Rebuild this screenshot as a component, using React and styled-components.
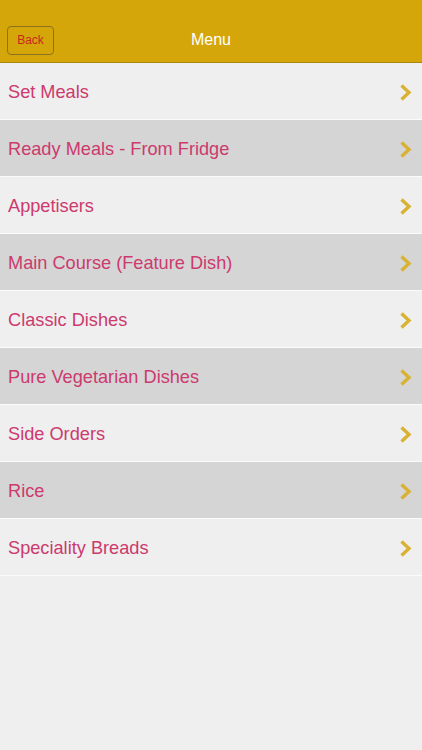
import React from "react";
import styled, { createGlobalStyle } from "styled-components";

const Global = createGlobalStyle`
  html, body { margin: 0; padding: 0; background: #efefef; }
  body { font-family: "Liberation Sans", Arial, sans-serif; }
`;

const Page = styled.div`
  width: 422px;
  min-height: 750px;
  background: #efefef;
`;

const Header = styled.header`
  box-sizing: content-box;
  height: 44px;
  padding: 18px 7px 0;
  background: #d4a60a;
  border-bottom: 1px solid #a8870c;
  display: grid;
  grid-template-columns: 1fr auto 1fr;
  align-items: center;
`;

const BackButton = styled.button`
  justify-self: start;
  width: 47px;
  height: 29px;
  border: 1.5px solid #8a7224;
  border-radius: 4px;
  background: transparent;
  color: #c9261c;
  font-family: "Liberation Sans", Arial, sans-serif;
  font-size: 12px;
  padding: 0;
`;

const Title = styled.h1`
  margin: 0;
  color: #ffffff;
  font-size: 16px;
  font-weight: normal;
`;

const List = styled.ul`
  list-style: none;
  margin: 0;
  padding: 0;
`;

const Row = styled.li`
  box-sizing: border-box;
  height: 57px;
  border-bottom: 1px solid #fbfbfb;
  background: ${(p) => (p.$alt ? "#d5d5d5" : "#efefef")};
  display: flex;
  align-items: center;
  justify-content: space-between;
  padding: 2px 9px 0 8px;
`;

const Label = styled.span`
  color: #cc3a6e;
  font-size: 18.2px;
`;

const Chevron = () => (
  <svg width="15" height="19" viewBox="0 0 15 19">
    <path d="M3.5 2.5 L11 9.5 L3.5 16.5" fill="none" stroke="#d9b234" strokeWidth="3.4" strokeLinecap="butt" strokeLinejoin="miter" />
  </svg>
);

const items = [
  "Set Meals",
  "Ready Meals - From Fridge",
  "Appetisers",
  "Main Course (Feature Dish)",
  "Classic Dishes",
  "Pure Vegetarian Dishes",
  "Side Orders",
  "Rice",
  "Speciality Breads",
];

export default function App() {
  return (
    <Page>
      <Global />
      <Header>
        <BackButton>Back</BackButton>
        <Title>Menu</Title>
        <span />
      </Header>
      <List>
        {items.map((it, i) => (
          <Row key={it} $alt={i % 2 === 1}>
            <Label>{it}</Label>
            <Chevron />
          </Row>
        ))}
      </List>
    </Page>
  );
}
